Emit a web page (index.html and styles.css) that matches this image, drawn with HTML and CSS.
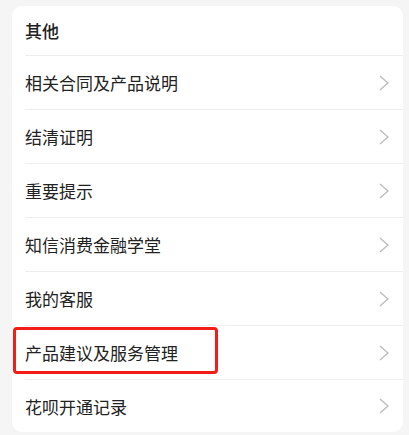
FILE: index.html
```html
<!DOCTYPE html>
<html lang="zh-CN">
<head>
  <meta charset="UTF-8">
  <meta name="viewport" content="width=device-width, initial-scale=1.0">
  <title>其他</title>
  <link rel="stylesheet" href="styles.css">
</head>
<body>

  <div class="card">
    <div class="card-title">其他</div>

    <div class="item"><span>相关合同及产品说明</span><svg class="arrow" viewBox="0 0 10 16"><path d="M1 1 L9 8 L1 15"/></svg></div>
    <div class="item"><span>结清证明</span><svg class="arrow" viewBox="0 0 10 16"><path d="M1 1 L9 8 L1 15"/></svg></div>
    <div class="item"><span>重要提示</span><svg class="arrow" viewBox="0 0 10 16"><path d="M1 1 L9 8 L1 15"/></svg></div>
    <div class="item"><span>知信消费金融学堂</span><svg class="arrow" viewBox="0 0 10 16"><path d="M1 1 L9 8 L1 15"/></svg></div>
    <div class="item"><span>我的客服</span><svg class="arrow" viewBox="0 0 10 16"><path d="M1 1 L9 8 L1 15"/></svg></div>
    <div class="item marcado"><span>产品建议及服务管理</span><svg class="arrow" viewBox="0 0 10 16"><path d="M1 1 L9 8 L1 15"/></svg></div>
    <div class="item ultimo"><span>花呗开通记录</span><svg class="arrow" viewBox="0 0 10 16"><path d="M1 1 L9 8 L1 15"/></svg></div>
  </div>

</body>
</html>
```

FILE: styles.css
```css
body {
  margin: 0;
  padding: 6px 6px 0 12px;
  background: #f5f5f5;
  font-family: "Noto Sans CJK SC", "Noto Sans", sans-serif;
  color: #222;
  height: 435px;
  box-sizing: border-box;
  overflow: hidden;
}

.card {
  background: white;
  border-radius: 10px;
  padding-left: 13px;
}

.card-title {
  height: 50px;
  display: flex;
  align-items: center;
  font-size: 17px;
  font-weight: 500;
  border-bottom: 1px solid #eeeeee;
  box-sizing: border-box;
}

.item {
  position: relative;
  height: 54px;
  display: flex;
  align-items: center;
  justify-content: space-between;
  padding-right: 14px;
  font-size: 17px;
  border-bottom: 1px solid #eeeeee;
  box-sizing: border-box;
}

.item.ultimo {
  border-bottom: none;
  height: 52px;
}

.arrow {
  width: 10px;
  height: 16px;
  fill: none;
  stroke: #bdbdbd;
  stroke-width: 1.4;
}

/* destaque vermelho */
.item.marcado::before {
  content: "";
  position: absolute;
  left: -12px;
  top: 1px;
  width: 205px;
  height: 47px;
  border: 3px solid #f21d17;
  border-radius: 4px;
  box-sizing: border-box;
}
```
